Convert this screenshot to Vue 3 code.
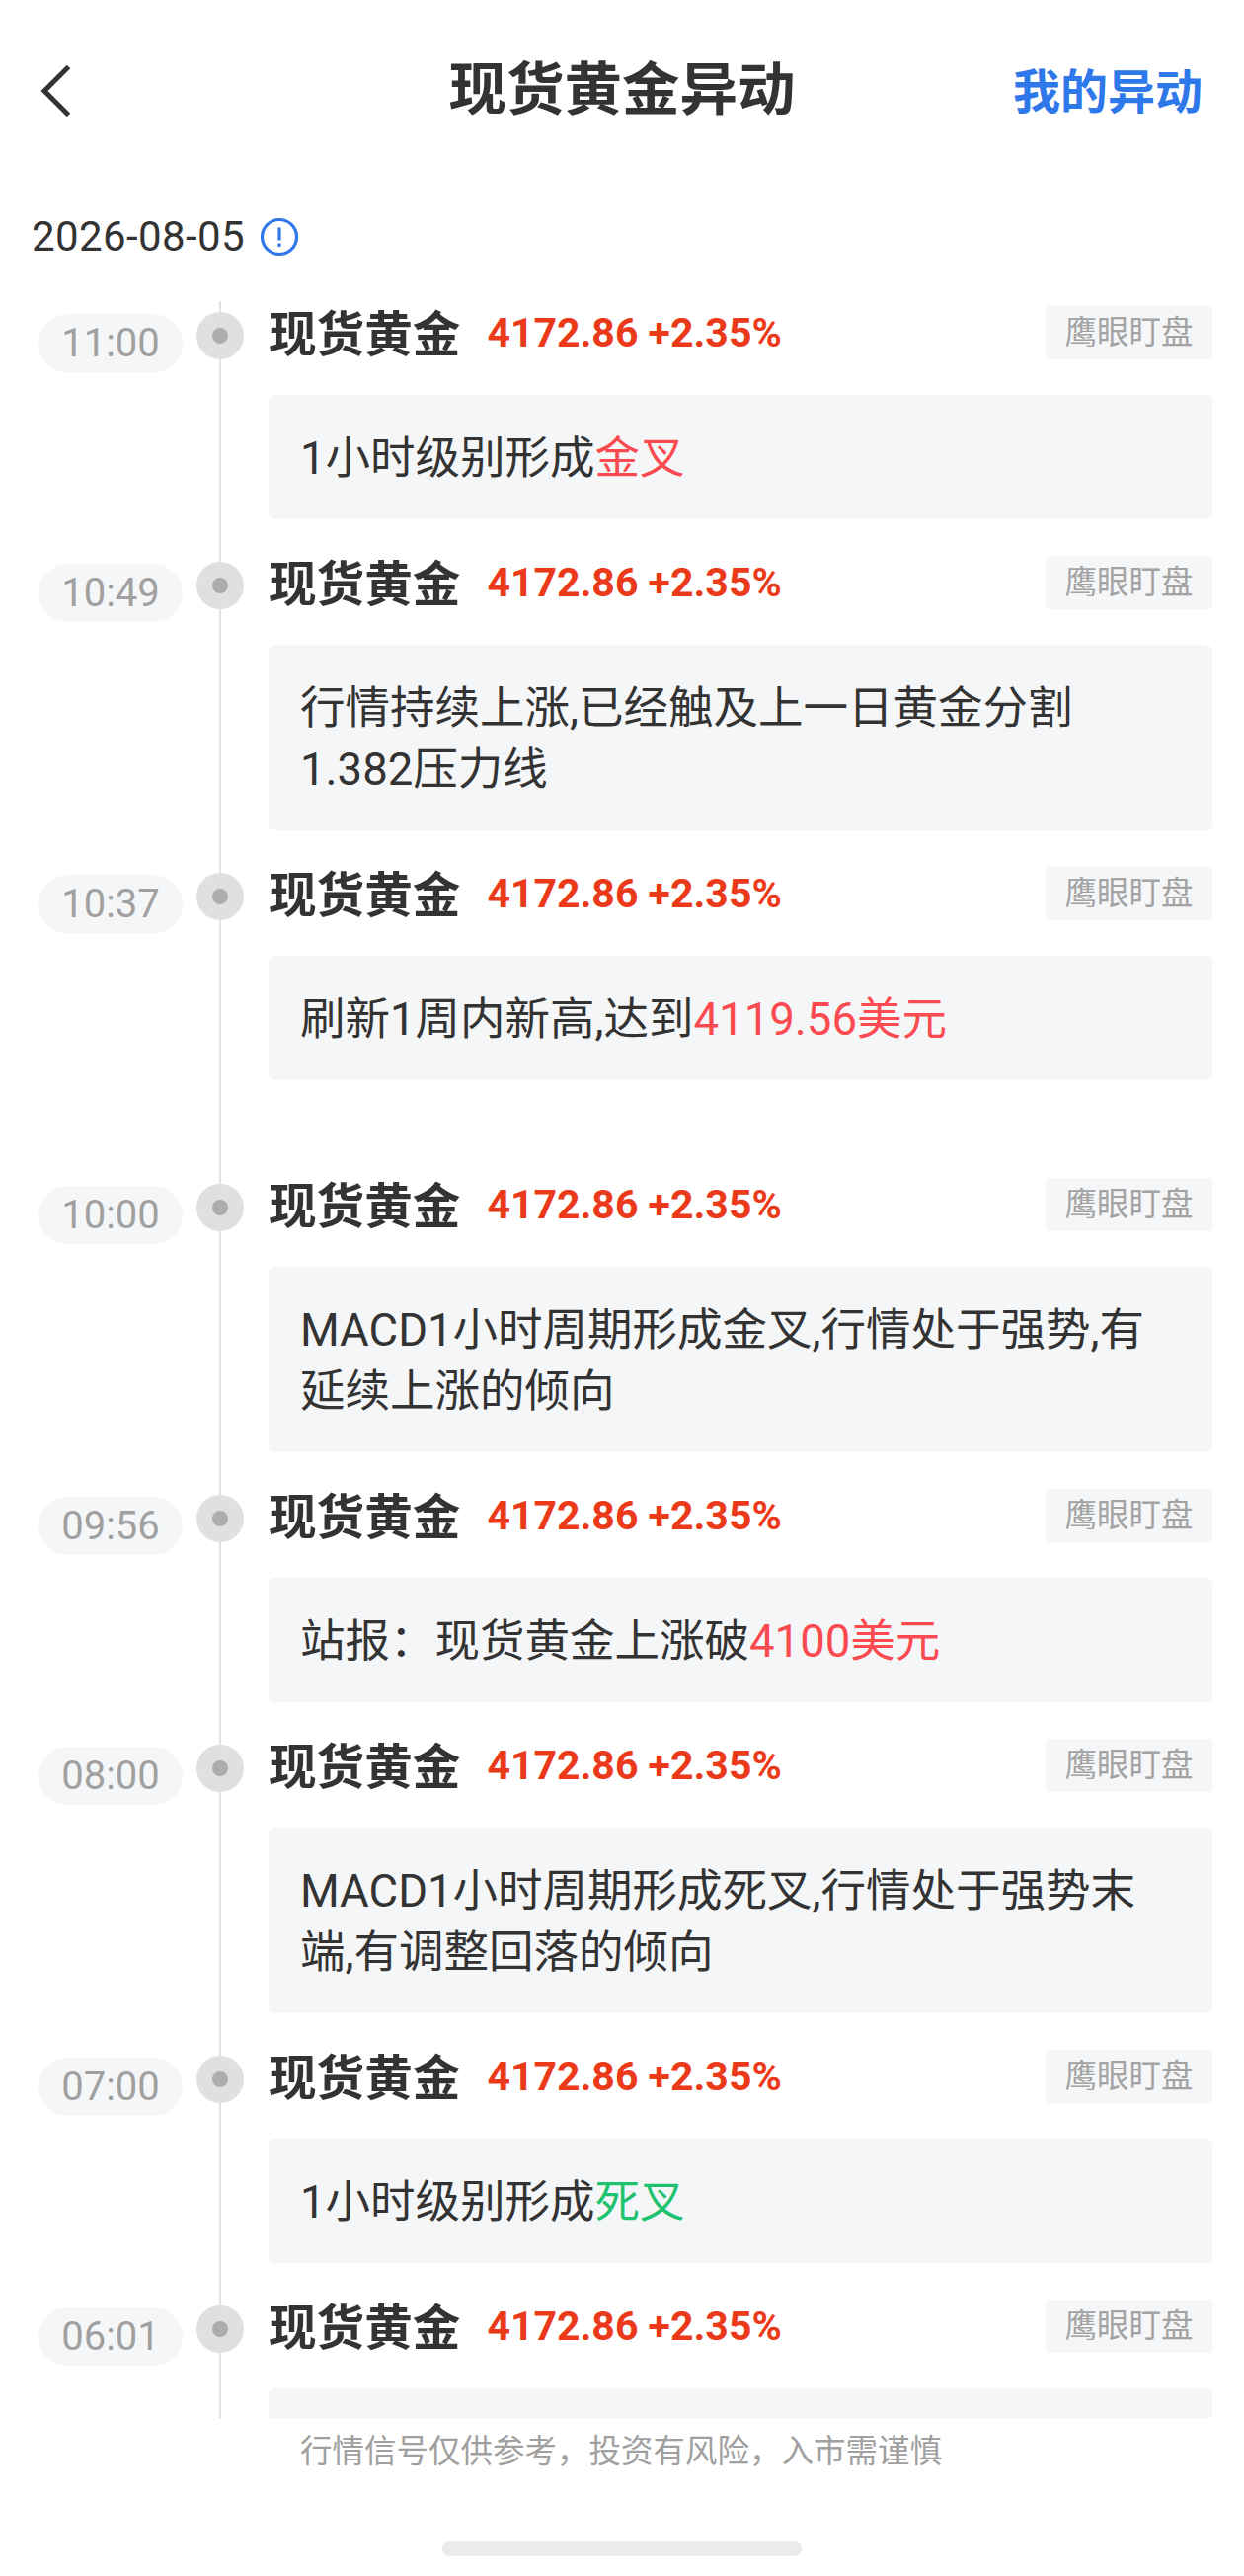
<template>
  <div class="page">
    <header class="nav">
      <svg class="back" width="32" height="54" viewBox="0 0 32 54">
        <path d="M29.5 2.5 L5 27 L29.5 51.5" fill="none" stroke="#333" stroke-width="5" />
      </svg>
      <h1 class="nav-title">现货黄金异动</h1>
      <span class="nav-link">我的异动</span>
    </header>

    <div class="date-row">
      <span class="date">2026-08-05</span>
      <svg class="info" width="40" height="40" viewBox="0 0 40 40">
        <circle cx="20" cy="20" r="17.5" fill="none" stroke="#2f78ea" stroke-width="3.2" />
        <path d="M20 10.5 V23.5" stroke="#2f78ea" stroke-width="3.2" fill="none" />
        <rect x="18.4" y="26.5" width="3.2" height="3.4" fill="#2f78ea" />
      </svg>
    </div>

    <div class="list">
      <div v-for="item in items" :key="item.time" class="row">
        <div class="time">{{ item.time }}</div>
        <div class="rail"><span class="dot"></span></div>
        <div class="content" :class="{ spaced: item.spaced }">
          <div class="head">
            <span class="name">现货黄金</span>
            <span class="price">4172.86 +2.35%</span>
            <span class="tag">鹰眼盯盘</span>
          </div>
          <div class="card">
            <span>{{ item.text }}</span><span v-if="item.mark" :class="item.tone">{{ item.mark }}</span>
          </div>
        </div>
      </div>
    </div>

    <footer class="note">行情信号仅供参考，投资有风险，入市需谨慎</footer>
    <div class="home-bar"></div>
  </div>
</template>

<script setup>
const items = [
  { time: "11:00", text: "1小时级别形成", mark: "金叉", tone: "up" },
  { time: "10:49", text: "行情持续上涨,已经触及上一日黄金分割1.382压力线" },
  { time: "10:37", text: "刷新1周内新高,达到", mark: "4119.56美元", tone: "up", spaced: true },
  { time: "10:00", text: "MACD1小时周期形成金叉,行情处于强势,有延续上涨的倾向" },
  { time: "09:56", text: "站报：现货黄金上涨破", mark: "4100美元", tone: "up" },
  { time: "08:00", text: "MACD1小时周期形成死叉,行情处于强势末端,有调整回落的倾向" },
  { time: "07:00", text: "1小时级别形成", mark: "死叉", tone: "down" },
  { time: "06:01", text: "" },
];
</script>

<style>
body {
  background: #fff;
}
</style>

<style scoped>
.page {
  height: 2609px;
  display: flex;
  flex-direction: column;
  overflow: hidden;
  background: #fff;
  color: #333;
  font-family: Roboto, "Noto Sans CJK SC", sans-serif;
}

.nav {
  height: 184px;
  flex: none;
  display: flex;
  align-items: center;
  justify-content: space-between;
  position: relative;
  padding: 0 42px 0 40px;
  box-sizing: border-box;
}

.back {
  display: block;
}

.nav-title {
  position: absolute;
  left: 0;
  right: 0;
  margin: 0;
  text-align: center;
  font-size: 58.5px;
  font-weight: 700;
  line-height: 80px;
  transform: translateY(-1px);
}

.nav-link {
  margin-bottom: 6px;
  font-size: 48px;
  font-weight: 700;
  color: #2f78ea;
}

.date-row {
  height: 121px;
  flex: none;
  box-sizing: border-box;
  padding: 18px 0 0 32px;
  display: flex;
  align-items: flex-start;
  gap: 15px;
}

.date {
  font-size: 42px;
  letter-spacing: 0.4px;
  line-height: 76px;
}

.info {
  margin-top: 18px;
}

.list {
  flex: none;
  height: 2144px;
  overflow: hidden;
  padding: 0 32px 0 39px;
}

.row {
  display: flex;
  align-items: flex-start;
}

.time {
  flex: none;
  width: 146px;
  height: 59px;
  margin-top: 13px;
  border-radius: 30px;
  background: #f5f6f8;
  color: #a0a0a0;
  font-size: 40px;
  line-height: 59px;
  text-align: center;
}

.rail {
  flex: none;
  align-self: stretch;
  width: 48px;
  margin: 0 25px 0 14px;
  position: relative;
}

.rail::before {
  content: "";
  position: absolute;
  left: 23px;
  top: 0;
  bottom: 0;
  width: 2px;
  background: #e2e2e2;
}

.dot {
  position: absolute;
  left: 0;
  top: 11px;
  width: 48px;
  height: 48px;
  border-radius: 50%;
  background: #e0e0e0;
}

.dot::after {
  content: "";
  position: absolute;
  left: 16px;
  top: 16px;
  width: 16px;
  height: 16px;
  border-radius: 50%;
  background: #adadad;
}

.content {
  flex: 1;
  min-width: 0;
  padding: 5px 0 32px;
}

.content.spaced {
  padding-bottom: 94px;
}

.head {
  height: 54px;
  margin-bottom: 36px;
  display: flex;
  align-items: center;
}

.name {
  font-size: 48.6px;
  font-weight: 700;
  margin-bottom: 5px;
}

.price {
  margin-left: 27px;
  font-size: 41px;
  font-weight: 700;
  color: #ea3a1a;
  margin-bottom: 1px;
}

.tag {
  margin-left: auto;
  width: 169px;
  height: 54px;
  border-radius: 4px;
  background: #f5f6f8;
  color: #a3a3a3;
  font-size: 32.5px;
  line-height: 54px;
  text-align: center;
}

.card {
  min-height: 126px;
  box-sizing: border-box;
  padding: 34px 52px 30px 32px;
  border-radius: 6px;
  background: #f5f6f8;
  font-size: 45.5px;
  line-height: 62px;
}

.up {
  color: #fb4a50;
}

.down {
  color: #1fc36f;
}

.note {
  flex: none;
  padding: 12px 0 0 304px;
  color: #a0a0a0;
  font-size: 32.5px;
  line-height: 44px;
}

.home-bar {
  position: absolute;
  left: 448px;
  top: 2574px;
  width: 364px;
  height: 15px;
  border-radius: 8px;
  background: #ebebeb;
}
</style>
